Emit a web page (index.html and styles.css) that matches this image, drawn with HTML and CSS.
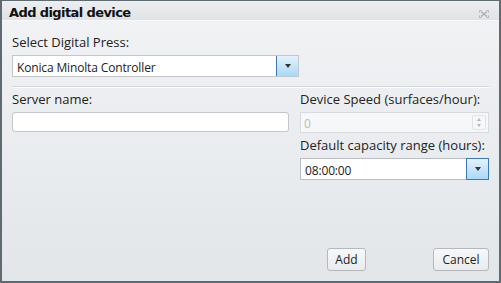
FILE: index.html
```html
<!DOCTYPE html>
<html lang="en">
<head>
  <meta charset="UTF-8">
  <title>Add digital device</title>
  <link rel="stylesheet" href="styles.css">
</head>
<body>
  <div class="window">
    <div class="titlebar">
      <span class="title">Add digital device</span>
      <svg class="close" width="10" height="8" viewBox="0 0 10 8">
        <path d="M2 1.5 L8 6.5 M8 1.5 L2 6.5" stroke="#a9adb1" stroke-width="1.2" fill="none"/>
        <path d="M0.5 2.5 V0.5 H2.5 M7.5 0.5 H9.5 V2.5 M9.5 5.5 V7.5 H7.5 M2.5 7.5 H0.5 V5.5" stroke="#b4b8bc" stroke-width="1" fill="none"/>
      </svg>
    </div>

    <div class="content">
      <!-- Press -->
      <div class="field">
        <label>Select Digital Press:</label>
        <div class="combo combo-press">
          <span class="combo-value">Konica Minolta Controller</span>
          <span class="combo-btn"><span class="arrow"></span></span>
        </div>
      </div>

      <div class="separator"></div>

      <div class="columns">
        <div class="col-left">
          <label>Server name:</label>
          <input type="text" class="text-input">
        </div>
        <div class="col-right">
          <label>Device Speed (surfaces/hour):</label>
          <div class="numeric">
            <span class="numeric-value">0</span>
            <span class="spinner">
              <span class="spin-up"></span>
              <span class="spin-down"></span>
            </span>
          </div>

          <label class="label-gap">Default capacity range (hours):</label>
          <div class="combo combo-time">
            <span class="combo-value">08:00:00</span>
            <span class="combo-btn"><span class="arrow"></span></span>
          </div>
        </div>
      </div>
    </div>

    <div class="footer">
      <button class="btn btn-add">Add</button>
      <button class="btn btn-cancel">Cancel</button>
    </div>
  </div>
</body>
</html>
```

FILE: styles.css
```css
html, body {
  margin: 0;
  padding: 0;
}
body {
  font-family: "Open Sans", "Noto Sans", sans-serif;
  font-size: 12px;
  color: #222;
  background: #fff;
}
.window {
  box-sizing: border-box;
  width: 501px;
  height: 283px;
  border: 2px solid #5f6a73;
  border-top-width: 1px;
  background: linear-gradient(#f1f3f5, #e3e6e9);
  display: flex;
  flex-direction: column;
}
.titlebar {
  height: 19px;
  display: flex;
  align-items: flex-start;
  justify-content: space-between;
  padding: 0 10px 0 7px;
  background: linear-gradient(#eceef0, #e0e3e6);
  border-bottom: 1px solid #f7f8f9;
}
.title {
  margin-top: 4px;
  font-family: "DejaVu Sans", sans-serif;
  font-weight: bold;
  font-size: 13px;
  line-height: 15px;
  color: #111;
  letter-spacing: -0.6px;
}
.close {
  display: block;
  margin-top: 9px;
}
.content {
  flex: 1;
  padding: 13px 10px 0 10px;
}
label {
  display: block;
  margin-bottom: 4px;
  font-size: 13px;
  line-height: 17px;
  color: #222;
}
.combo {
  box-sizing: border-box;
  height: 22px;
  display: flex;
  border: 1px solid #c3c7cb;
  background: #fff;
}
.combo-press {
  width: 287px;
}
.combo-value {
  flex: 1;
  padding: 3px 0 0 4px;
  font-size: 12px;
  letter-spacing: -0.15px;
}
.combo-btn {
  width: 21px;
  border-left: 1px solid #3b78b4;
  background: linear-gradient(#e4f2fb, #a9d9f6);
  display: flex;
  align-items: center;
  justify-content: center;
}
.arrow {
  width: 0;
  height: 0;
  border-left: 3.5px solid transparent;
  border-right: 3.5px solid transparent;
  border-top: 4px solid #333;
}
.separator {
  height: 1px;
  background: #d2d6da;
  border-bottom: 1px solid #fbfcfc;
  margin: 9px 0 3px 0;
}
.columns {
  display: flex;
  gap: 11px;
}
.col-left {
  width: 277px;
}
.col-right {
  width: 189px;
}
.text-input {
  box-sizing: border-box;
  display: block;
  width: 277px;
  height: 20px;
  margin-top: 1px;
  border: 1px solid #c3c7cb;
  border-radius: 3px;
  background: #fff;
}
.numeric {
  box-sizing: border-box;
  height: 21px;
  display: flex;
  border: 1px solid #d8dbde;
  background: #f6f7f8;
  color: #b8bcc0;
}
.numeric-value {
  flex: 1;
  padding: 2px 0 0 3px;
  font-size: 12px;
}
.spinner {
  width: 12px;
  margin: 2px 2px 2px 0;
  display: flex;
  flex-direction: column;
  border: 1px solid #e1e3e5;
  border-radius: 2px;
}
.spin-up, .spin-down {
  flex: 1;
  display: flex;
  align-items: center;
  justify-content: center;
}
.spin-up::after {
  content: "";
  border-left: 2.5px solid transparent;
  border-right: 2.5px solid transparent;
  border-bottom: 3px solid #b4b8bc;
}
.spin-down::after {
  content: "";
  border-left: 2.5px solid transparent;
  border-right: 2.5px solid transparent;
  border-top: 3px solid #b4b8bc;
}
.label-gap {
  margin-top: 4px;
}
.combo-time {
  width: 189px;
  border-color: #b9bec3;
}
.combo-time .combo-btn {
  margin: -1px -1px -1px 0;
  border: 1px solid #3b78b4;
}
.footer {
  display: flex;
  justify-content: flex-end;
  gap: 67px;
  padding: 0 10px 10px 0;
}
.btn {
  box-sizing: border-box;
  height: 23px;
  padding: 0 6px;
  font-family: "Open Sans", "Noto Sans", sans-serif;
  font-size: 12px;
  color: #222;
  border: 1px solid #b5b9bd;
  border-radius: 3px;
  background: linear-gradient(#f7f8f9, #e9ebed);
}
.btn-add {
  width: 39px;
}
.btn-cancel {
  width: 56px;
}
```
